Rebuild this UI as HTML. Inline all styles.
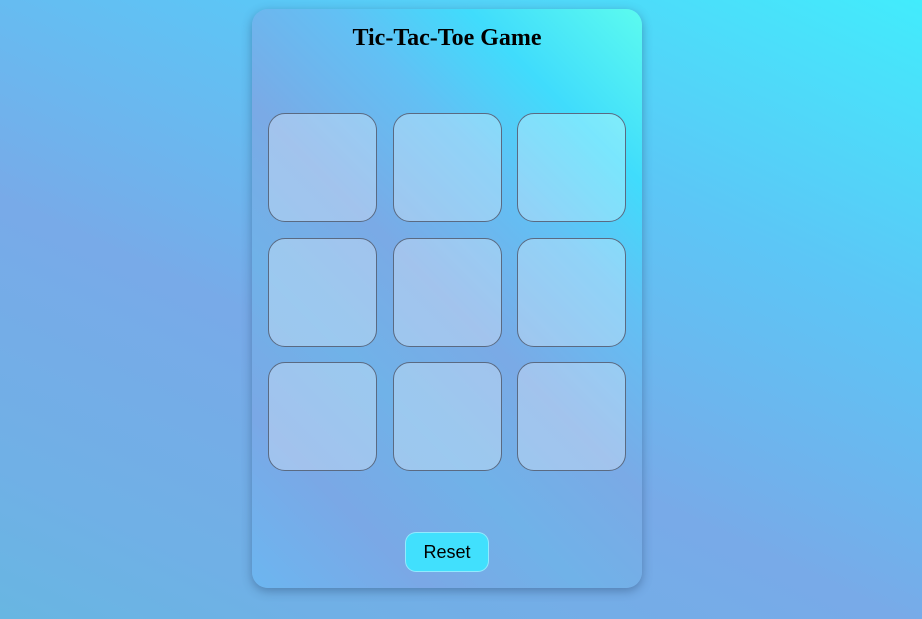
<!DOCTYPE html>
<html><head><style>
html,body{margin:0;width:922px;height:619px;overflow:hidden;}
body{background:linear-gradient(205deg,#42ecfc 0%,#5cc6f6 30%,#78aae8 60%,#70b0e6 85%,#68b6e2 100%);font-family:"Liberation Serif",serif;position:relative;}
.card{position:absolute;left:252px;top:9px;width:390px;height:579px;border-radius:16px;
background:linear-gradient(225deg,#5cfbef 0%,#40dcfc 18%,#62c0f4 32%,#7aaae6 50%,#70b2e8 66%,#7aa8e6 82%,#6cb6f0 100%);
box-shadow:0 3px 10px rgba(40,70,110,.45);}
h1{margin:0;position:absolute;top:16px;width:100%;text-align:center;font-size:24px;font-weight:bold;color:#000;}
.cell{position:absolute;width:107px;height:107px;border:1px solid #5a6a82;border-radius:17px;background:rgba(255,255,255,.3);}
.btn{position:absolute;left:153px;top:523px;width:84px;height:40px;box-sizing:border-box;border:1px solid rgba(200,240,255,.6);border-radius:11px;background:#41e0fd;font-family:"Liberation Sans",sans-serif;font-size:18px;text-align:center;line-height:38px;color:#000;}
</style></head><body>
<div class="card">
<h1>Tic-Tac-Toe Game</h1>
<div class="cell" style="left:16px;top:104px"></div>
<div class="cell" style="left:141px;top:104px"></div>
<div class="cell" style="left:265px;top:104px"></div>
<div class="cell" style="left:16px;top:229px"></div>
<div class="cell" style="left:141px;top:229px"></div>
<div class="cell" style="left:265px;top:229px"></div>
<div class="cell" style="left:16px;top:353px"></div>
<div class="cell" style="left:141px;top:353px"></div>
<div class="cell" style="left:265px;top:353px"></div>
<div class="btn">Reset</div>
</div>
</body></html>
